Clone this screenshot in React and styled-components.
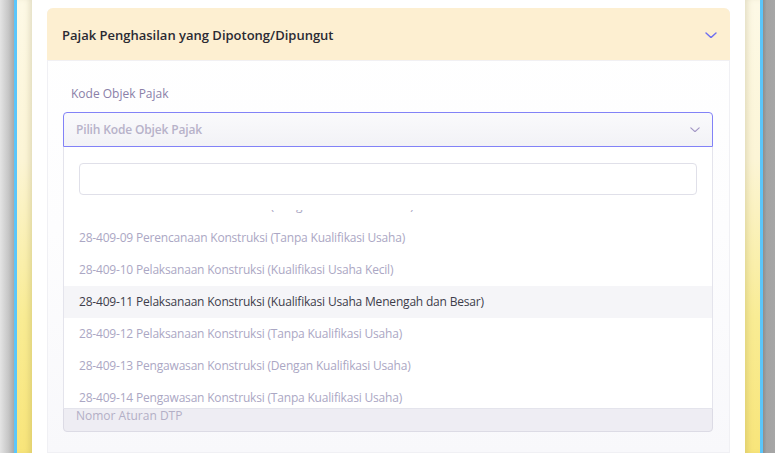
import React, { useEffect, useRef } from "react";
import styled, { createGlobalStyle } from "styled-components";

const GlobalStyle = createGlobalStyle`
  html, body {
    margin: 0;
    padding: 0;
    height: 453px;
    overflow: hidden;
    font-family: "Open Sans", "Liberation Sans", sans-serif;
  }
  * {
    box-sizing: border-box;
  }
`;

const kodeObjek = [
  "28-409-01 Pelaksanaan Konstruksi (Kualifikasi Usaha Kecil)",
  "28-409-02 Pelaksanaan Konstruksi (Kualifikasi Usaha Menengah)",
  "28-409-03 Pelaksanaan Konstruksi (Kualifikasi Usaha Besar)",
  "28-409-04 Pengawasan Konstruksi (Kualifikasi Usaha Kecil)",
  "28-409-05 Pengawasan Konstruksi (Kualifikasi Usaha Menengah)",
  "28-409-06 Perencanaan Konstruksi (Kualifikasi Usaha Kecil)",
  "28-409-07 Perencanaan Konstruksi (Kualifikasi Usaha Besar)",
  "28-409-08 Perencanaan Konstruksi (Dengan Kualifikasi Usaha)",
  "28-409-09 Perencanaan Konstruksi (Tanpa Kualifikasi Usaha)",
  "28-409-10 Pelaksanaan Konstruksi (Kualifikasi Usaha Kecil)",
  "28-409-11 Pelaksanaan Konstruksi (Kualifikasi Usaha Menengah dan Besar)",
  "28-409-12 Pelaksanaan Konstruksi (Tanpa Kualifikasi Usaha)",
  "28-409-13 Pengawasan Konstruksi (Dengan Kualifikasi Usaha)",
  "28-409-14 Pengawasan Konstruksi (Tanpa Kualifikasi Usaha)",
  "28-409-15 Konstruksi Terintegrasi (Kualifikasi Usaha Kecil)",
  "28-409-16 Konstruksi Terintegrasi (Kualifikasi Usaha Menengah dan Besar)",
];

const ROW_HEIGHT = 32;
const FIRST_VISIBLE = 7; // the 28-409-08 row, only its tail is shown
const HIGHLIGHTED = "28-409-11";

const Chevron = ({ size = 12, color }) => (
  <svg width={size} height={size * 0.55} viewBox="0 0 12 6.6" fill="none">
    <path
      d="M1 1 L6 5.6 L11 1"
      stroke={color}
      strokeWidth="1.4"
      strokeLinecap="round"
      strokeLinejoin="round"
    />
  </svg>
);

const App = () => {
  const listRef = useRef(null);

  useEffect(() => {
    if (listRef.current) {
      listRef.current.scrollTop = FIRST_VISIBLE * ROW_HEIGHT + 20;
    }
  }, []);

  return (
    <>
      <GlobalStyle />
      <Screen>
        <Edge $side="left" />
        <BlueLine />
        <Backdrop $side="left" />

        <Card>
          <Panel>
            <PanelHeader>
              <PanelTitle>Pajak Penghasilan yang Dipotong/Dipungut</PanelTitle>
              <Chevron size={12} color="#6f6ff0" />
            </PanelHeader>

            <PanelBody>
              <FieldGroup>
                <Label>Kode Objek Pajak</Label>
                <SelectWrap>
                  <SelectBox $open>
                    <Placeholder $bold>Pilih Kode Objek Pajak</Placeholder>
                    <Chevron size={10} color="#a195c4" />
                  </SelectBox>

                  <Dropdown>
                    <SearchInput type="text" />
                    <OptionList ref={listRef}>
                      {kodeObjek.map((item) => (
                        <Option
                          key={item}
                          $active={item.startsWith(HIGHLIGHTED)}
                        >
                          {item}
                        </Option>
                      ))}
                    </OptionList>
                  </Dropdown>
                </SelectWrap>
              </FieldGroup>

              <FieldGroup>
                <Label>Fasilitas</Label>
                <SelectBox>
                  <Placeholder>Pilih Fasilitas</Placeholder>
                  <Chevron size={10} color="#a195c4" />
                </SelectBox>
              </FieldGroup>

              <FieldGroup>
                <Label>Keterangan</Label>
                <TextArea placeholder="Keterangan" />
              </FieldGroup>

              <FieldGroup>
                <Label>Nomor Aturan DTP</Label>
                <Input disabled placeholder="Nomor Aturan DTP" />
              </FieldGroup>
            </PanelBody>
          </Panel>
        </Card>

        <Backdrop $side="right" />
        <BlueLine />
        <Edge $side="right" />
      </Screen>
    </>
  );
};

const Screen = styled.div`
  display: flex;
  width: 775px;
  height: 453px;
  overflow: hidden;
`;

const Edge = styled.div`
  flex: 0 0 ${(p) => (p.$side === "left" ? "14px" : "12px")};
  background: ${(p) =>
    p.$side === "left"
      ? "linear-gradient(90deg, #e4e4e4 0%, #c6c6c6 60%, #a9a9a9 100%)"
      : "linear-gradient(90deg, #8e8e8e 0%, #a3a3a3 30%, #a6a6a6 100%)"};
`;

const BlueLine = styled.div`
  flex: 0 0 3px;
  background: #5ac6fb;
`;

const Backdrop = styled.div`
  flex: 0 0 15px;
  background: linear-gradient(
    180deg,
    #fdf9e6 0%,
    #fcf5d6 35%,
    #f9ec94 70%,
    #f8e57a 100%
  );
  box-shadow: ${(p) =>
    p.$side === "left"
      ? "inset -5px 0 6px -3px rgba(120, 110, 60, 0.22)"
      : "inset 5px 0 6px -3px rgba(120, 110, 60, 0.22)"};
`;

const Card = styled.div`
  flex: 1;
  background: #ffffff;
  padding: 8px 15px 0 15px;
`;

const Panel = styled.div`
  height: 100%;
  border: 1px solid #f0f0f4;
  border-top: none;
  border-radius: 6px 6px 0 0;
  background: linear-gradient(180deg, #ffffff 0%, #fdfdfe 50%, #f8f8fb 100%);
`;

const PanelHeader = styled.div`
  display: flex;
  align-items: center;
  justify-content: space-between;
  height: 53px;
  margin: 0 -1px;
  padding: 2px 13px 0 15px;
  background: #fdefd1;
  border-radius: 6px 6px 0 0;
  border-bottom: 1px solid #f1f0f3;
`;

const PanelTitle = styled.h3`
  margin: 0;
  font-size: 13px;
  font-weight: 600;
  color: #2a2a33;
`;

const PanelBody = styled.div`
  display: flex;
  flex-direction: column;
  gap: 22px;
  padding: 24px 16px 0 15px;
`;

const FieldGroup = styled.div`
  display: flex;
  flex-direction: column;
  gap: 9px;
`;

const Label = styled.label`
  padding-left: 8px;
  font-size: 12px;
  line-height: 18px;
  color: #8a80a8;
`;

const SelectWrap = styled.div`
  position: relative;
`;

const SelectBox = styled.div`
  display: flex;
  align-items: center;
  justify-content: space-between;
  height: 35px;
  padding: 0 12px 0 12px;
  border: 1px solid ${(p) => (p.$open ? "#8282f7" : "#dddce6")};
  border-radius: ${(p) => (p.$open ? "4px 4px 0 0" : "4px")};
  background: linear-gradient(180deg, #fafafc 0%, #f2f2f6 100%);
`;

const Placeholder = styled.span`
  font-size: 12px;
  font-weight: ${(p) => (p.$bold ? 600 : 400)};
  letter-spacing: -0.15px;
  color: #b7b2c9;
`;

const Dropdown = styled.div`
  position: absolute;
  top: 100%;
  left: 0;
  right: 0;
  z-index: 5;
  display: flex;
  flex-direction: column;
  gap: 15px;
  padding-top: 16px;
  background: #ffffff;
  border: 1px solid #e4e4ec;
  border-top: none;
`;

const SearchInput = styled.input`
  height: 32px;
  margin: 0 15px;
  border: 1px solid #e0e0e9;
  border-radius: 4px;
  outline: none;
  background: #ffffff;
`;

const OptionList = styled.ul`
  height: 198px;
  margin: 0;
  padding: 0;
  list-style: none;
  overflow-y: scroll;
  scrollbar-width: none;
  &::-webkit-scrollbar {
    display: none;
  }
`;

const Option = styled.li`
  height: ${ROW_HEIGHT}px;
  padding: 0 15px;
  font-size: 12px;
  line-height: ${ROW_HEIGHT}px;
  white-space: nowrap;
  letter-spacing: -0.19px;
  color: ${(p) => (p.$active ? "#3d3d4b" : "#aba7c4")};
  background: ${(p) => (p.$active ? "#f5f5f8" : "transparent")};
`;

const TextArea = styled.textarea`
  height: 69px;
  resize: none;
  border: 1px solid #dddce6;
  border-radius: 4px;
  background: #fafafc;
`;

const Input = styled.input`
  height: 34px;
  padding: 0 12px;
  font-family: inherit;
  font-size: 12px;
  border: 1px solid #dcdbe5;
  border-radius: 4px;
  background: #eeedf3;
  &::placeholder {
    color: #b3afc6;
  }
`;

export default App;
